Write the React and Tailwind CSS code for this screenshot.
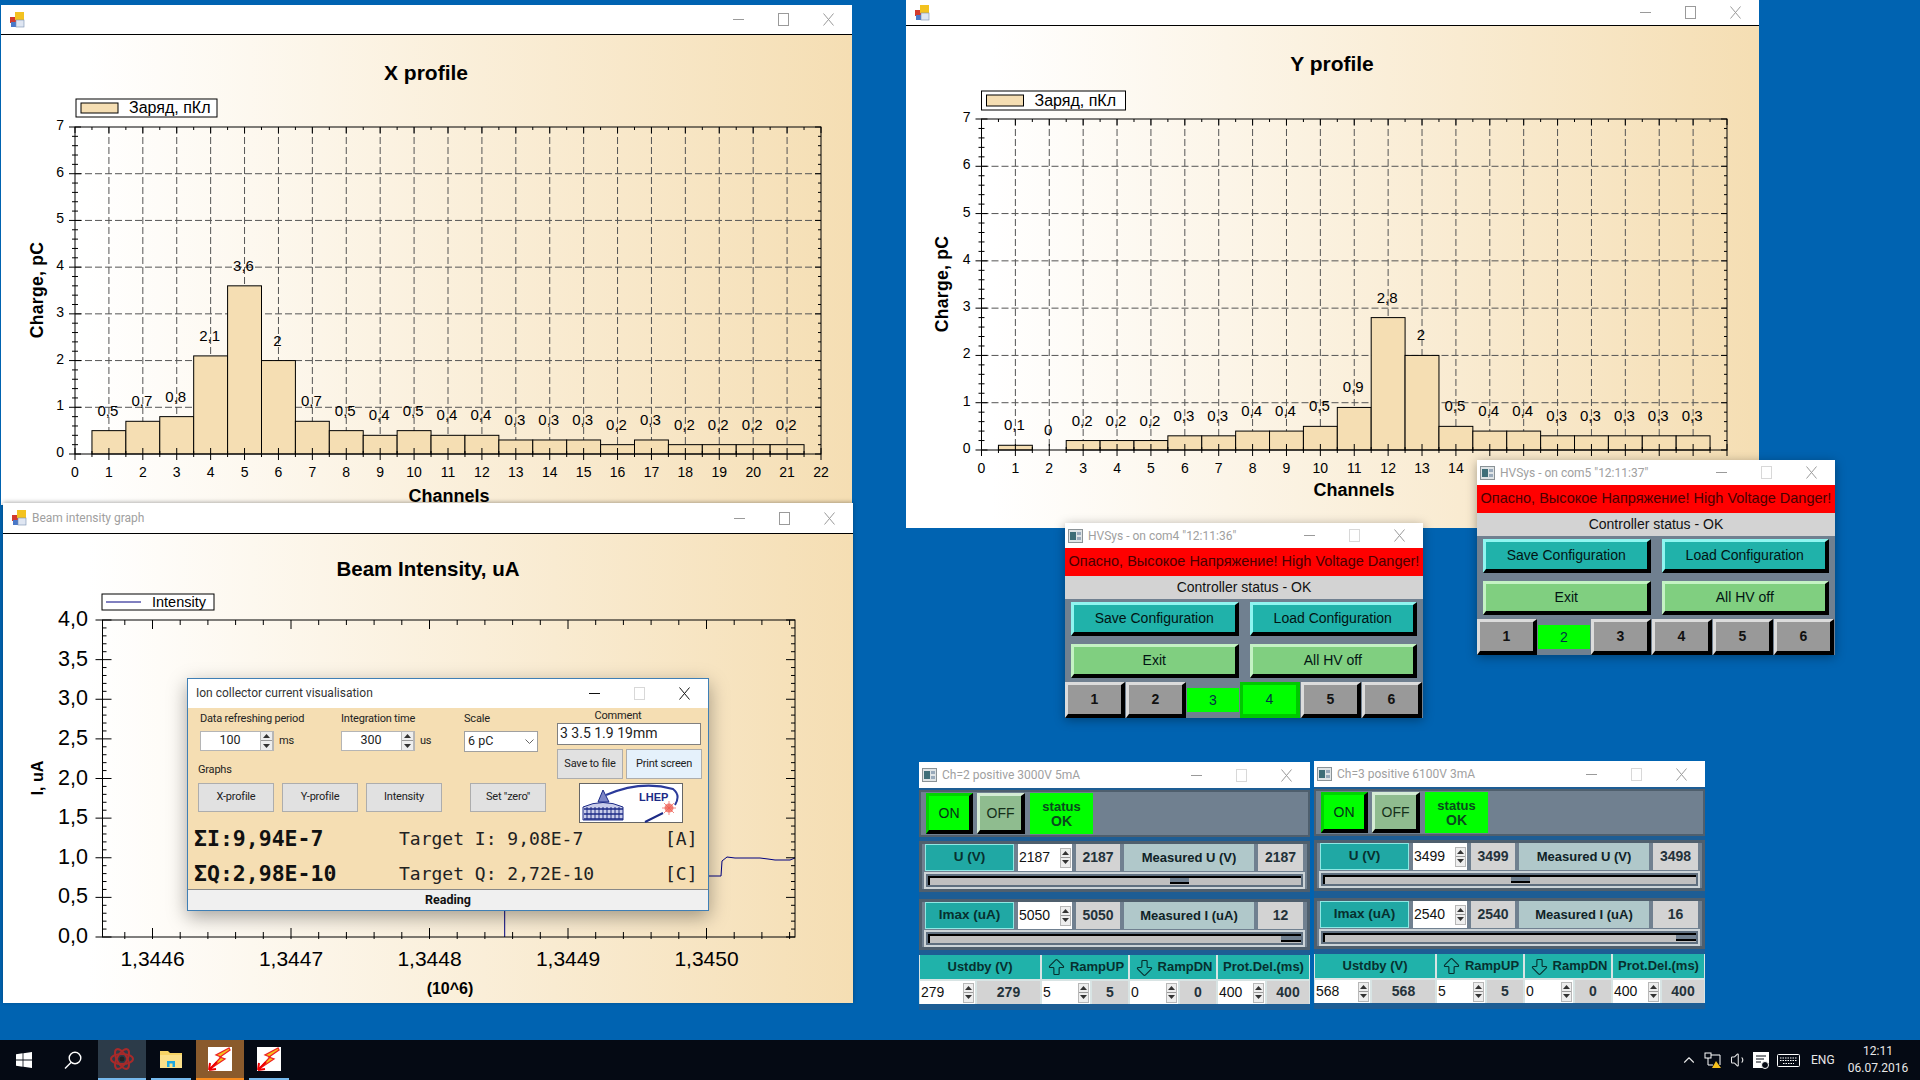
import React from 'react';
import { ArrowBigUp, ArrowBigDown, ChevronUp, Volume1 } from 'lucide-react';

const sans = "font-['Liberation_Sans',Arial,sans-serif]";
const ui = "font-['Roboto',sans-serif]";
const small = 'text-[11px] tracking-[-0.2px]';

const AppIcon = () => (
    <svg width="15" height="16" viewBox="0 0 15 16">
        <rect x="0" y="5" width="6" height="6" fill="#d23a2e" />
        <rect x="5" y="0" width="9" height="8" fill="#f3c21f" />
        <rect x="1" y="10" width="5" height="5" fill="#4a78c8" />
        <rect x="6" y="8" width="8" height="7" fill="#dfe6f2" stroke="#7b8fb0" strokeWidth="0.6" />
    </svg>
);

const TkIcon = () => (
    <svg width="15" height="14" viewBox="0 0 15 14">
        <rect x="0.5" y="0.5" width="14" height="13" fill="#dfe4e6" stroke="#8a9296" />
        <rect x="2" y="3" width="6" height="8" fill="#3f6e78" />
        <rect x="9" y="3" width="4" height="3" fill="#9ab" />
        <rect x="9" y="8" width="4" height="3" fill="#9ab" />
    </svg>
);

// min / max / close glyphs, 45px cells like Windows 10
const Caption = ({ dark, faintMax }) => {
    const c = dark ? '#111' : '#9a9a9a';
    return (
        <div className="flex items-center pr-[1px]">
            <div className="w-[45px] flex justify-center">
                <svg width="11" height="11"><path d="M0 5.5H11" stroke={c} /></svg>
            </div>
            <div className="w-[45px] flex justify-center">
                <svg width="11" height="13"><rect x="0.5" y="0.5" width="10" height="12" fill="none" stroke={faintMax ? '#d8d8d8' : c} /></svg>
            </div>
            <div className="w-[45px] flex justify-center">
                <svg width="11" height="13"><path d="M0.5 0.5L10.5 12.5M10.5 0.5L0.5 12.5" stroke={c} /></svg>
            </div>
        </div>
    );
};

const TitleBar = ({ icon, title, dark, faintMax, className }) => (
    <div className={`flex items-center justify-between bg-white ${className}`}>
        <div className={`flex items-center gap-[5px] pl-[3px] text-[12px] ${ui} ${dark ? 'text-[#222]' : 'text-[#a0a0a0]'}`}>
            {icon}
            <span className="whitespace-nowrap">{title}</span>
        </div>
        <Caption dark={dark} faintMax={faintMax} />
    </div>
);

// Chart drawn in page coordinates through the viewBox origin
const BarChart = ({ ox, oy, w, h, title, titleX, titleY, legend, l, t, r, b, values, chX, chY, qX, qY }) => {
    const ux = (r - l) / 22;
    const uy = (b - t) / 7;
    const px = (v) => l + v * ux;
    const py = (v) => b - v * uy;
    const xTicks = [...Array(45)].map((_, i) => i / 2);
    const yTicks = [...Array(36)].map((_, i) => i / 5);
    return (
        <svg width={w} height={h} viewBox={`${ox} ${oy} ${w} ${h}`} className={`block ${sans}`}>
            <text x={titleX} y={titleY + 7} textAnchor="middle" fontSize="21" fontWeight="700">{title}</text>
            <rect x={legend[0]} y={legend[1]} width={legend[2]} height={legend[3]} fill="#fff" stroke="#000" />
            <rect x={legend[0] + 5} y={legend[1] + 4} width="37" height={legend[3] - 8} fill="#f5deb3" stroke="#000" />
            <text x={legend[0] + 53} y={legend[1] + legend[3] / 2 + 5} fontSize="16">Заряд, пКл</text>

            {[1, 2, 3, 4, 5, 6].map((v) => (
                <line key={v} x1={l} x2={r} y1={py(v)} y2={py(v)} stroke="#555" strokeDasharray="7 3" />
            ))}
            {[...Array(21)].map((_, i) => (
                <line key={i} x1={px(i + 1)} x2={px(i + 1)} y1={t} y2={b} stroke="#555" strokeDasharray="7 3" />
            ))}
            {values.map((v, i) => (
                <rect key={i} x={px(i + 0.5)} y={py(v)} width={ux} height={v * uy} fill="#f5deb3" stroke="#000" />
            ))}
            <rect x={l} y={t} width={r - l} height={b - t} fill="none" stroke="#000" />
            {xTicks.map((v) => {
                const s = Number.isInteger(v) ? 6 : 3;
                return (
                    <g key={v} stroke="#000">
                        <line x1={px(v)} x2={px(v)} y1={b - s} y2={b + s} />
                        <line x1={px(v)} x2={px(v)} y1={t} y2={t + s} />
                    </g>
                );
            })}
            {yTicks.map((v) => {
                const s = Number.isInteger(v) ? 6 : 3;
                return (
                    <g key={v} stroke="#000">
                        <line x1={l - s} x2={l + s} y1={py(v)} y2={py(v)} />
                        <line x1={r - s} x2={r} y1={py(v)} y2={py(v)} />
                    </g>
                );
            })}
            {[...Array(23)].map((_, i) => (
                <text key={i} x={px(i)} y={b + 23} textAnchor="middle" fontSize="14">{i}</text>
            ))}
            {[...Array(8)].map((_, i) => (
                <text key={i} x={l - 11} y={py(i) + 3} textAnchor="end" fontSize="14">{i}</text>
            ))}
            {values.map((v, i) => (
                <text key={i} x={px(i + 1) - 1} y={py(v) - 15} textAnchor="middle" fontSize="15">{String(v).replace('.', ',')}</text>
            ))}
            <text x={chX} y={chY + 6} textAnchor="middle" fontSize="18" fontWeight="700">Channels</text>
            <text transform={`translate(${qX + 6} ${qY}) rotate(-90)`} textAnchor="middle" fontSize="17.5" fontWeight="700" letterSpacing="0.3">Charge, pC</text>
        </svg>
    );
};

const IntensityChart = () => {
    const l = 102.5, r = 795, t = 621, b = 938;
    const xt = [...Array(25)].map((_, i) => 124.8 + i * 27.7);
    const yt = [...Array(41)].map((_, i) => b - (i * (b - t)) / 40);
    return (
        <svg width="848" height="469" viewBox="3 535 848 469" className={`block ${sans}`}>
            <text x="428" y="577" textAnchor="middle" fontSize="20.5" fontWeight="700">Beam Intensity, uA</text>
            <rect x="102" y="595" width="112" height="16" fill="#fff" stroke="#000" />
            <line x1="106" x2="141" y1="603" y2="603" stroke="#000080" />
            <text x="152" y="608" fontSize="14.5">Intensity</text>
            <path d="M504.7 880V938M690 877H721L722 862L727 858L735 859H760L768 860L775 861H790L795 859" fill="none" stroke="#000080" />
            <rect x={l} y={t} width={r - l} height={b - t} fill="none" stroke="#000" />
            {xt.map((x, i) => {
                const s = i % 5 === 1 ? 9 : 5;
                return (
                    <g key={i} stroke="#000">
                        <line x1={x} x2={x} y1={b - s} y2={b + 2} />
                        <line x1={x} x2={x} y1={t} y2={t + s} />
                    </g>
                );
            })}
            {yt.map((y, i) => {
                const s = i % 5 === 0 ? 9 : 4;
                return (
                    <g key={i} stroke="#000">
                        <line x1={l - (i % 5 === 0 ? 7 : 0)} x2={l + s} y1={y} y2={y} />
                        <line x1={r - s} x2={r} y1={y} y2={y} />
                    </g>
                );
            })}
            {['0,0', '0,5', '1,0', '1,5', '2,0', '2,5', '3,0', '3,5', '4,0'].map((s, i) => (
                <text key={s} x="88" y={b - (i * (b - t)) / 8 + 6} textAnchor="end" fontSize="21.5">{s}</text>
            ))}
            {['1,3446', '1,3447', '1,3448', '1,3449', '1,3450'].map((s, i) => (
                <text key={s} x={152.5 + i * 138.5} y="967" textAnchor="middle" fontSize="21">{s}</text>
            ))}
            <text x="450" y="995" textAnchor="middle" fontSize="16" fontWeight="700">(10^6)</text>
            <text transform="translate(43 779) rotate(-90)" textAnchor="middle" fontSize="16" fontWeight="700">I, uA</text>
        </svg>
    );
};

const SpinArrows = ({ className = 'w-[13px]' }) => (
    <div className={`flex flex-col h-[20px] border border-[#b8b8b8] bg-[#eee] ${className}`}>
        <div className="flex-1 flex items-center justify-center border-b border-[#999]">
            <svg width="7" height="4"><path d="M3.5 0L7 4H0Z" fill="#333" /></svg>
        </div>
        <div className="flex-1 flex items-center justify-center">
            <svg width="7" height="4"><path d="M0 0H7L3.5 4Z" fill="#333" /></svg>
        </div>
    </div>
);

const DialogSpin = ({ value, unit }) => (
    <div className="flex items-center gap-[5px]">
        <div className="w-[74px] h-[20px] bg-white border border-[#b5b5b5] flex items-center justify-between">
            <span className="w-[58px] text-center text-[12.5px]">{value}</span>
            <SpinArrows />
        </div>
        <span className={small}>{unit}</span>
    </div>
);

const GrayBtn = ({ children, className = '' }) => (
    <div className={`h-[29px] bg-[#e1e1e1] border border-[#adadad] flex items-center justify-center ${small} ${className}`}>
        {children}
    </div>
);

const LhepLogo = () => (
    <svg width="104" height="40" viewBox="0 0 104 40" className="block">
        <rect x="0.5" y="0.5" width="103" height="39" fill="#fff" stroke="#666" />
        <path d="M4 24Q24 15 44 24V37H4Z" fill="#c9cdea" stroke="#1c2a86" />
        <path d="M19 19L24 7L30 19Z" fill="#7d86c6" stroke="#1c2a86" />
        <path d="M5 26H44M5 31H44M5 36H44" stroke="#1c2a86" strokeWidth="1.5" />
        <path d="M8 24V36M12 24V36M16 24V36M20 24V36M24 24V36M28 24V36M32 24V36M36 24V36M40 24V36" stroke="#1c2a86" />
        <path d="M27 12Q62 -3 94 6Q102 12 96 22" fill="none" stroke="#2a3a9a" strokeWidth="2" />
        <text x="60" y="18" fontSize="11" fontWeight="700" fill="#1c2a86" className={sans}>LHEP</text>
        <circle cx="90" cy="25" r="4.5" fill="#f2867c" />
        <path d="M83 25H97M90 18V32M85 20L95 30M95 20L85 30" stroke="#ef5a50" strokeWidth="0.7" />
        <path d="M66 39L84 30" stroke="#1c2a86" strokeWidth="2" />
    </svg>
);

const IonDialog = () => (
    <div className={`absolute left-[187px] top-[678px] w-[522px] h-[233px] flex flex-col border border-[#3f7fb5] bg-[#f5deb3] text-[#222] shadow-[0_6px_18px_rgba(0,0,0,0.35)] ${ui}`}>
        <div className="h-[29px] bg-white flex items-center justify-between pl-[8px]">
            <span className="text-[12px] text-[#333]">Ion collector current visualisation</span>
            <Caption dark faintMax />
        </div>
        <div className="flex h-[117px]">
            <div className="w-[369px] pl-[10px] flex flex-col">
                <div className="flex pl-[2px] pt-[4px]">
                    <div className="w-[141px] flex flex-col gap-[5px]">
                        <span className={`${small} leading-[14px]`}>Data refreshing period</span>
                        <DialogSpin value="100" unit="ms" />
                    </div>
                    <div className="w-[123px] flex flex-col gap-[5px]">
                        <span className={`${small} leading-[14px]`}>Integration time</span>
                        <DialogSpin value="300" unit="us" />
                    </div>
                    <div className="w-[74px] flex flex-col gap-[5px]">
                        <span className={`${small} leading-[14px]`}>Scale</span>
                        <div className="h-[21px] bg-white border border-[#a0a0a0] flex items-center justify-between px-[3px] text-[12.5px]">
                            6 pC
                            <svg width="9" height="5"><path d="M0.5 0.5L4.5 4.5L8.5 0.5" fill="none" stroke="#666" /></svg>
                        </div>
                    </div>
                </div>
                <span className={`mt-[11px] ${small} leading-[14px]`}>Graphs</span>
                <div className="flex mt-[6px]">
                    <GrayBtn className="w-[76px] mr-[8px]">X-profile</GrayBtn>
                    <GrayBtn className="w-[76px] mr-[8px]">Y-profile</GrayBtn>
                    <GrayBtn className="w-[76px] mr-[28px]">Intensity</GrayBtn>
                    <GrayBtn className="w-[76px]">Set "zero"</GrayBtn>
                </div>
            </div>
            <div className="w-[146px] flex flex-col">
                <span className={`${small} leading-[14px] text-center pt-px pr-[24px]`}>Comment</span>
                <div className="w-[144px] h-[22px] bg-white border border-[#808080] flex items-center pl-[2px] text-[14px]">3 3.5 1.9 19mm</div>
                <div className="flex mt-[4px] gap-[3px]">
                    <GrayBtn className="w-[66px] h-[30px]">Save to file</GrayBtn>
                    <GrayBtn className="w-[76px] h-[30px] bg-[#e5f1fb] border-[#0078d7]">Print screen</GrayBtn>
                </div>
                <div className="pl-[22px] mt-[4px]"><LhepLogo /></div>
            </div>
        </div>
        <div className="flex-1 flex flex-col pl-[6px] font-['DejaVu_Sans_Mono',monospace] leading-none">
            <div className="flex items-center h-[30px]">
                <span className="w-[205px] text-[21.5px] font-bold text-[#111]">ΣI:9,94E-7</span>
                <span className="w-[266px] text-[18px] text-[#222]">Target I: 9,08E-7</span>
                <span className="text-[18px] text-[#222]">[A]</span>
            </div>
            <div className="flex items-center h-[35px] pt-[4px]">
                <span className="w-[205px] text-[21.5px] font-bold text-[#111]">ΣQ:2,98E-10</span>
                <span className="w-[266px] text-[18px] text-[#222]">Target Q: 2,72E-10</span>
                <span className="text-[18px] text-[#222]">[C]</span>
            </div>
        </div>
        <div className="h-[21px] bg-[#f0f0f0] border-t border-[#888] flex items-center justify-center text-[12.5px] font-bold text-[#111]">Reading</div>
    </div>
);

const bevel = 'border-t-[3px] border-l-[3px] border-r-[4px] border-b-[4px] border-r-black border-b-black';

const HvBtn = ({ children, kind }) => (
    <div className={`h-[34px] flex items-center justify-center text-[14px] text-[#021413] ${bevel} ${kind === 'teal' ? 'bg-[#20b2aa] border-t-[#8ff5f0] border-l-[#8ff5f0]' : 'bg-[#80cf80] border-t-[#c4f2c4] border-l-[#c4f2c4]'}`}>
        {children}
    </div>
);

const HvTab = ({ n, kind }) => {
    if (kind === 'flat') {
        return <div className="w-[52px] h-[24px] self-center bg-[#00ff00] flex items-center justify-center text-[14px] text-[#034]">{n}</div>;
    }
    if (kind === 'on') {
        return <div className="flex-1 flex items-center justify-center text-[14px] text-[#034] bg-[#00ff00] border-t-[3px] border-l-[3px] border-r-[4px] border-b-[4px] border-[#00c800]">{n}</div>;
    }
    return <div className={`flex-1 flex items-center justify-center text-[14px] font-bold text-[#111] bg-[#999999] border-t-[#dcdcdc] border-l-[#dcdcdc] ${bevel}`}>{n}</div>;
};

const HvSysWindow = ({ className, title, tabs }) => (
    <div className={`absolute w-[358px] h-[195px] flex flex-col bg-[#708090] shadow-[0_2px_10px_rgba(0,0,0,0.35)] ${sans} ${className}`}>
        <TitleBar icon={<TkIcon />} title={title} className="h-[25px]" faintMax />
        <div className="h-[28px] bg-[#ff0000] flex items-center justify-center text-[14.5px] text-[#4a0000] whitespace-nowrap">Опасно, Высокое Напряжение! High Voltage Danger!</div>
        <div className="h-[23px] bg-[#d3d3d3] flex items-center justify-center text-[14px] text-[#111]">Controller status - OK</div>
        <div className="grid grid-cols-2 gap-x-[11px] gap-y-[8px] px-[6px] pt-[3px] pb-[4px]">
            <HvBtn kind="teal">Save Configuration</HvBtn>
            <HvBtn kind="teal">Load Configuration</HvBtn>
            <HvBtn kind="green">Exit</HvBtn>
            <HvBtn kind="green">All HV off</HvBtn>
        </div>
        <div className="flex-1 flex gap-[1px] pr-[1px]">
            {tabs.map((kind, i) => <HvTab key={i} n={i + 1} kind={kind} />)}
        </div>
    </div>
);

const Spin = ({ value, className = '' }) => (
    <div className={`bg-white flex items-center justify-between pl-[1px] pr-[1px] text-[14px] font-normal text-[#111] ${className}`}>
        <span>{value}</span>
        <SpinArrows className="w-[11px]" />
    </div>
);

const ValueCell = ({ children, className = '' }) => (
    <div className={`bg-[#d3d3d3] flex items-center justify-center text-[14px] font-bold text-[#24323a] ${className}`}>{children}</div>
);

const Slider = ({ thumbClass }) => (
    <div className="h-[17px] mt-px border-2 border-[#ccd4d8] bg-[#5f6f7f] p-[2px] mx-[-1px]">
        <div className="relative h-full bg-[#c0c0c0] border-t-2 border-l-2 border-black">
            <div className={`absolute top-0 h-[6px] bg-[#708090] border-b-2 border-black ${thumbClass}`} />
        </div>
    </div>
);

const ControlRow = ({ label, set, value, measuredLabel, measured, thumbClass }) => (
    <div className="h-[51px] bg-[#708090] border-[3px] border-[#4f5f6d] flex flex-col px-[3px]">
        <div className="flex gap-[4px] h-[27px] text-[13px] font-bold">
            <div className="w-[89px] bg-[#20a8a4] border border-[#8fe8e4] flex items-center justify-center text-[#07302f] text-[13.5px]">{label}</div>
            <Spin value={set} className="w-[54px]" />
            <ValueCell className="w-[44px]">{value}</ValueCell>
            <div className="w-[130px] bg-[#b0c8ca] flex items-center justify-center text-[#0f2226]">{measuredLabel}</div>
            <ValueCell className="w-[45px]">{measured}</ValueCell>
        </div>
        <Slider thumbClass={thumbClass} />
    </div>
);

const TealHead = ({ children, className = '' }) => (
    <div className={`h-[24px] bg-[#20b2aa] flex items-center justify-center gap-[3px] text-[13px] font-bold text-[#07302f] ${className}`}>{children}</div>
);

const ChannelWindow = ({ className, title, u, uv, um, uThumb, i, iv, im, iThumb, st }) => (
    <div className={`absolute w-[391px] h-[248px] flex flex-col bg-[#1d5d94] ${sans} ${className}`}>
        <TitleBar icon={<TkIcon />} title={title} className="h-[26px]" faintMax />
        <div className="h-[47px] mt-[2px] bg-[#708090] border-2 border-[#4f5f6d] flex gap-[4px] pl-[5px] items-center">
            <div className={`w-[47px] h-[41px] bg-[#00ff00] border-t-[#00d400] border-l-[#00d400] flex items-center justify-center text-[14px] text-[#063018] ${bevel}`}>ON</div>
            <div className={`w-[48px] h-[41px] bg-[#8fbc8f] border-t-[#d5ecd5] border-l-[#d5ecd5] flex items-center justify-center text-[14px] text-[#15301a] ${bevel}`}>OFF</div>
            <div className="w-[63px] h-[41px] ml-px bg-[#00ff00] flex flex-col items-center justify-center text-[13px] font-bold leading-[15px] text-[#0a4a1e]">
                <span>status</span>
                <span className="text-[14px]">OK</span>
            </div>
        </div>
        <div className="mt-[4px]"><ControlRow label="U (V)" set={u} value={uv} measuredLabel="Measured U (V)" measured={um} thumbClass={uThumb} /></div>
        <div className="mt-[7px]"><ControlRow label="Imax (uA)" set={i} value={iv} measuredLabel="Measured I (uA)" measured={im} thumbClass={iThumb} /></div>
        <div className="mt-[5px] bg-[#d8e4e4] flex flex-col gap-[2px] pl-px">
            <div className="flex gap-[2px]">
                <TealHead className="w-[120px]">Ustdby (V)</TealHead>
                <TealHead className="w-[86px]"><ArrowBigUp size={21} strokeWidth={1.3} />RampUP</TealHead>
                <TealHead className="w-[86px]"><ArrowBigDown size={21} strokeWidth={1.3} />RampDN</TealHead>
                <TealHead className="w-[91px]">Prot.Del.(ms)</TealHead>
            </div>
            <div className="flex gap-[2px] h-[23px]">
                <Spin value={st} className="w-[55px]" />
                <ValueCell className="w-[63px]">{st}</ValueCell>
                <Spin value="5" className="w-[48px]" />
                <ValueCell className="w-[36px]">5</ValueCell>
                <Spin value="0" className="w-[48px]" />
                <ValueCell className="w-[36px]">0</ValueCell>
                <Spin value="400" className="w-[47px]" />
                <ValueCell className="w-[42px]">400</ValueCell>
            </div>
        </div>
    </div>
);

const BoltIcon = () => (
    <svg width="24" height="24" viewBox="0 0 24 24">
        <rect width="24" height="24" fill="#fff" />
        <path d="M21 1L8 8L13 10L2 22L17 12L12 10L22 3Z" fill="#f6c21a" stroke="#e22" strokeWidth="1.3" />
        <path d="M1 23L9 15M1 23L2 16M1 23L8 22" stroke="#e00" strokeWidth="2" fill="none" />
    </svg>
);

const Taskbar = () => (
    <div className={`h-[40px] bg-[#050a14] flex items-stretch text-[#e8e8e8] ${ui}`}>
        <div className="w-[48px] flex items-center justify-center">
            <svg width="16" height="16" viewBox="0 0 16 16" fill="#fff"><path d="M0 2.3L6.6 1.3V7.6H0ZM7.4 1.2L16 0V7.6H7.4ZM0 8.4H6.6V14.7L0 13.7ZM7.4 8.4H16V16L7.4 14.8Z" /></svg>
        </div>
        <div className="w-[50px] flex items-center justify-center">
            <svg width="18" height="18" viewBox="0 0 18 18" fill="none" stroke="#fff" strokeWidth="1.4"><circle cx="11" cy="7" r="5.8" /><path d="M7 11.5L1 17.5" /></svg>
        </div>
        <div className="w-[48px] bg-[#2c3b49] flex items-center justify-center border-b-2 border-[#76b9ed]">
            <svg width="24" height="24" viewBox="0 0 24 24" fill="none" stroke="#a82a2a" strokeWidth="2">
                <ellipse cx="12" cy="12" rx="11" ry="5" />
                <ellipse cx="12" cy="12" rx="11" ry="5" transform="rotate(60 12 12)" />
                <ellipse cx="12" cy="12" rx="11" ry="5" transform="rotate(120 12 12)" />
                <circle cx="12" cy="12" r="2.5" fill="#222" stroke="none" />
            </svg>
        </div>
        <div className="w-[40px] ml-[5px] flex items-center justify-center border-b-2 border-[#76b9ed]">
            <svg width="22" height="20" viewBox="0 0 22 20">
                <path d="M0 2H8L10 4H22V19H0Z" fill="#f6d365" />
                <path d="M0 6H22V19H0Z" fill="#fbe08a" />
                <path d="M7 18V12H15V18H12.5V14.5H9.5V18Z" fill="#1fa8e0" />
            </svg>
        </div>
        <div className="w-[48px] ml-[5px] bg-[#8a5a2c] flex items-center justify-center border-b-2 border-[#f78a1d]"><BoltIcon /></div>
        <div className="w-[40px] ml-[5px] flex items-center justify-center border-b-2 border-[#76b9ed]"><BoltIcon /></div>
        <div className="flex-1" />
        <div className="flex items-center pr-[13px]">
            <ChevronUp size={18} strokeWidth={1.5} />
            <svg width="18" height="17" viewBox="0 0 18 17" fill="none" stroke="#fff" className="ml-[6px]">
                <rect x="1" y="1" width="6" height="5" /><path d="M4 6V13H9M7 3H16V13" />
                <path d="M12 9L17 16H8Z" fill="#f7c11e" stroke="none" />
            </svg>
            <Volume1 size={18} strokeWidth={1.4} className="ml-[8px]" />
            <svg width="16" height="17" viewBox="0 0 16 17" className="ml-[5px]">
                <path d="M0 0H16V11L11 16H0Z" fill="#fff" />
                <path d="M3 4H13M3 7H11M3 10H8" stroke="#050a14" />
                <circle cx="12" cy="13" r="3.5" fill="#050a14" stroke="#fff" />
            </svg>
            <svg width="23" height="13" viewBox="0 0 23 13" fill="none" stroke="#fff" className="ml-[8px]">
                <rect x="0.5" y="0.5" width="22" height="12" rx="1" />
                <path d="M3 4H20M3 6.5H20M6 9.5H17" strokeDasharray="1.5 1" />
            </svg>
            <span className="ml-[11px] text-[12px] w-[24px]">ENG</span>
            <div className="ml-[14px] w-[58px] flex flex-col items-center text-[12px] leading-[17px]">
                <span>12:11</span>
                <span>06.07.2016</span>
            </div>
        </div>
    </div>
);

const xValues = [0.5, 0.7, 0.8, 2.1, 3.6, 2, 0.7, 0.5, 0.4, 0.5, 0.4, 0.4, 0.3, 0.3, 0.3, 0.2, 0.3, 0.2, 0.2, 0.2, 0.2];
const yValues = [0.1, 0, 0.2, 0.2, 0.2, 0.3, 0.3, 0.4, 0.4, 0.5, 0.9, 2.8, 2, 0.5, 0.4, 0.4, 0.3, 0.3, 0.3, 0.3, 0.3];

const App = () => {
    return (
        <div className={`w-[1920px] h-[1080px] flex flex-col overflow-hidden bg-[#0063b1] ${sans}`}>
            <div className="relative flex-1">
                {/* X profile */}
                <div className="absolute left-[1px] top-[5px] w-[851px] h-[500px] flex flex-col bg-white">
                    <TitleBar icon={<span className="pl-[6px]"><AppIcon /></span>} title="" className="h-[30px] border-b border-black" />
                    <div className="flex-1 bg-gradient-to-r from-white from-10% to-[#f5deb3]">
                        <BarChart ox={1} oy={35} w={849} h={470} title="X profile" titleX={426} titleY={73} legend={[76, 99, 141, 18]}
                            l={75} t={127} r={821} b={454} values={xValues} chX={449} chY={496} qX={37} qY={290} />
                    </div>
                </div>
                {/* Beam intensity */}
                <div className="absolute left-[3px] top-[503px] w-[850px] h-[500px] flex flex-col bg-white shadow-[0_-1px_4px_rgba(0,0,0,0.3)]">
                    <TitleBar icon={<span className="pl-[6px]"><AppIcon /></span>} title="Beam intensity graph" className="h-[31px] border-b border-black" />
                    <div className="flex-1 bg-gradient-to-r from-white from-10% to-[#f5deb3]">
                        <IntensityChart />
                    </div>
                </div>
                <IonDialog />
                {/* Y profile */}
                <div className="absolute left-[906px] top-0 w-[853px] h-[528px] flex flex-col bg-white">
                    <TitleBar icon={<span className="pl-[6px]"><AppIcon /></span>} title="" className="h-[26px] border-b border-black" />
                    <div className="flex-1 bg-gradient-to-r from-white from-10% to-[#f5deb3]">
                        <BarChart ox={906} oy={26} w={852} h={502} title="Y profile" titleX={1332} titleY={64} legend={[981.5, 91, 144, 19]}
                            l={981.5} t={119} r={1727} b={450} values={yValues} chX={1354} chY={490} qX={941.5} qY={284} />
                    </div>
                </div>
                <HvSysWindow className="left-[1065px] top-[523px]" title={'HVSys - on com4 "12:11:36"'} tabs={['up', 'up', 'flat', 'on', 'up', 'up']} />
                <HvSysWindow className="left-[1477px] top-[460px]" title={'HVSys - on com5 "12:11:37"'} tabs={['up', 'flat', 'up', 'up', 'up', 'up']} />
                <ChannelWindow className="left-[919px] top-[762px]" title="Ch=2 positive 3000V 5mA" u="2187" uv="2187" um="2187" uThumb="left-[240px] w-[19px]"
                    i="5050" iv="5050" im="12" iThumb="right-0 w-[20px]" st="279" />
                <ChannelWindow className="left-[1314px] top-[761px]" title="Ch=3 positive 6100V 3mA" u="3499" uv="3499" um="3498" uThumb="left-[186px] w-[19px]"
                    i="2540" iv="2540" im="16" iThumb="right-0 w-[20px]" st="568" />
            </div>
            <Taskbar />
        </div>
    );
};

export default App;
